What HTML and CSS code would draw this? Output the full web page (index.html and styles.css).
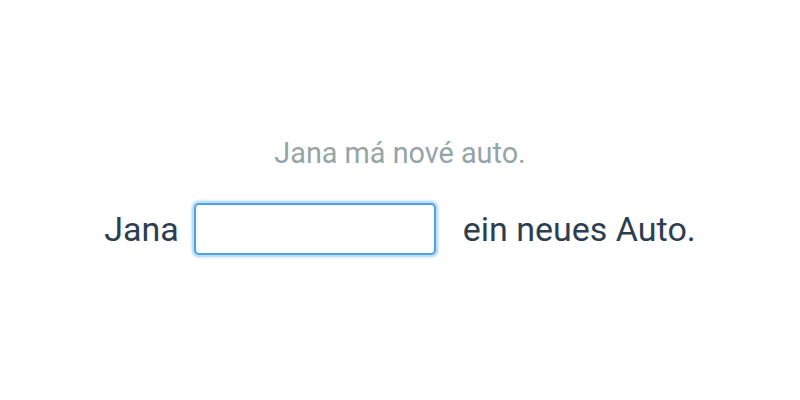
FILE: index.html
```html
<!DOCTYPE html>
<html lang="de">
<head>
<meta charset="utf-8">
<link rel="stylesheet" href="styles.css">
</head>
<body>
<main class="exercise">
  <p class="prompt">Jana má nové auto.</p>
  <div class="sentence">
    <span class="word">Jana</span>
    <input class="blank" type="text">
    <span class="word rest">ein neues Auto.</span>
  </div>
</main>
</body>
</html>
```
FILE: styles.css
```css
html, body {
  margin: 0;
  padding: 0;
  background: #ffffff;
}
body {
  width: 800px;
  height: 400px;
  font-family: Roboto, "Noto Sans", sans-serif;
}
.exercise {
  box-sizing: border-box;
  height: 400px;
  padding-top: 136px;
  display: flex;
  flex-direction: column;
  align-items: center;
}
.prompt {
  margin: 0 0 33px 0;
  font-size: 28.8px;
  color: #95a5a6;
  line-height: 34px;
}
.sentence {
  display: flex;
  align-items: center;
  font-size: 34px;
  color: #2c3e50;
  line-height: 40px;
}
.blank {
  width: 242px;
  height: 52px;
  box-sizing: border-box;
  margin: 0 27px 0 15px;
  border: 2px solid #4aa3e6;
  border-radius: 5px;
  box-shadow: 0 0 0 2px #c0def6, 0 0 2px 3px #d8ebfa;
  outline: none;
  font: inherit;
  padding: 0 10px;
}
```
